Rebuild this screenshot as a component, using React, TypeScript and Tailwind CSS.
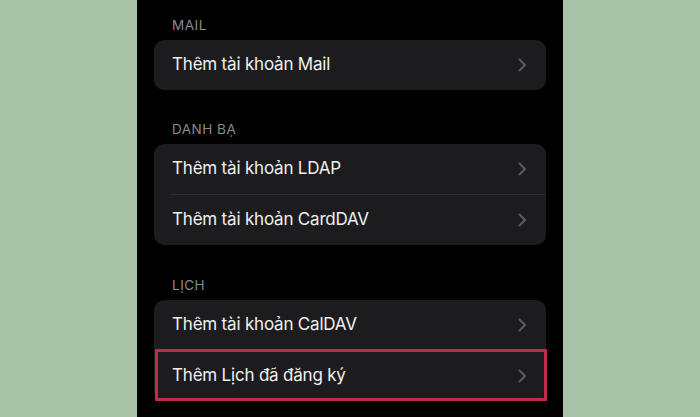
function Chevron() {
  return (
    <svg width="9" height="14" viewBox="0 0 9 14" fill="none" className="shrink-0">
      <path
        d="M1.5 1.5L7 7l-5.5 5.5"
        stroke="#5c5c60"
        strokeWidth="2"
        strokeLinecap="round"
        strokeLinejoin="round"
      />
    </svg>
  );
}

function Row({ label, highlighted }: { label: string; highlighted?: boolean }) {
  return (
    <div className="relative flex h-[50px] items-center justify-between pl-[18px] pr-[19px]">
      <span className="text-[17px] tracking-[-0.2px] text-[#f0f0f2]">{label}</span>
      <Chevron />
      {highlighted ? (
        <div className="pointer-events-none absolute -top-[2px] bottom-0 left-px -right-px border-[3px] border-[#c22a4a]" />
      ) : null}
    </div>
  );
}

function Section({
  title,
  rows,
  className,
}: {
  title: string;
  rows: { label: string; highlighted?: boolean }[];
  className?: string;
}) {
  return (
    <div className={className}>
      <div className="h-[15px] pl-[18px] text-[13.5px] leading-[15px] tracking-[0.5px] text-[#8a8a8e]">
        {title}
      </div>
      <div className="mt-[7px] rounded-[10px] bg-[#1c1c1e]">
        {rows.map((r, i) => (
          <div key={r.label}>
            {i > 0 ? <div className="ml-4 h-px bg-[#2e2e31]" /> : null}
            <Row label={r.label} highlighted={r.highlighted} />
          </div>
        ))}
      </div>
    </div>
  );
}

export default function App() {
  return (
    <div
      className="flex h-[417px] w-[700px] justify-center overflow-hidden bg-[#a8c3a7]"
      style={{ fontFamily: "Inter, 'Noto Sans', sans-serif" }}
    >
      <div className="w-[426px] bg-black px-[17px] pt-[18px]">
        <Section title="MAIL" rows={[{ label: "Thêm tài khoản Mail" }]} />
        <Section
          className="mt-[32px]"
          title="DANH BẠ"
          rows={[{ label: "Thêm tài khoản LDAP" }, { label: "Thêm tài khoản CardDAV" }]}
        />
        <Section
          className="mt-[33px]"
          title="LỊCH"
          rows={[
            { label: "Thêm tài khoản CalDAV" },
            { label: "Thêm Lịch đã đăng ký", highlighted: true },
          ]}
        />
      </div>
    </div>
  );
}
